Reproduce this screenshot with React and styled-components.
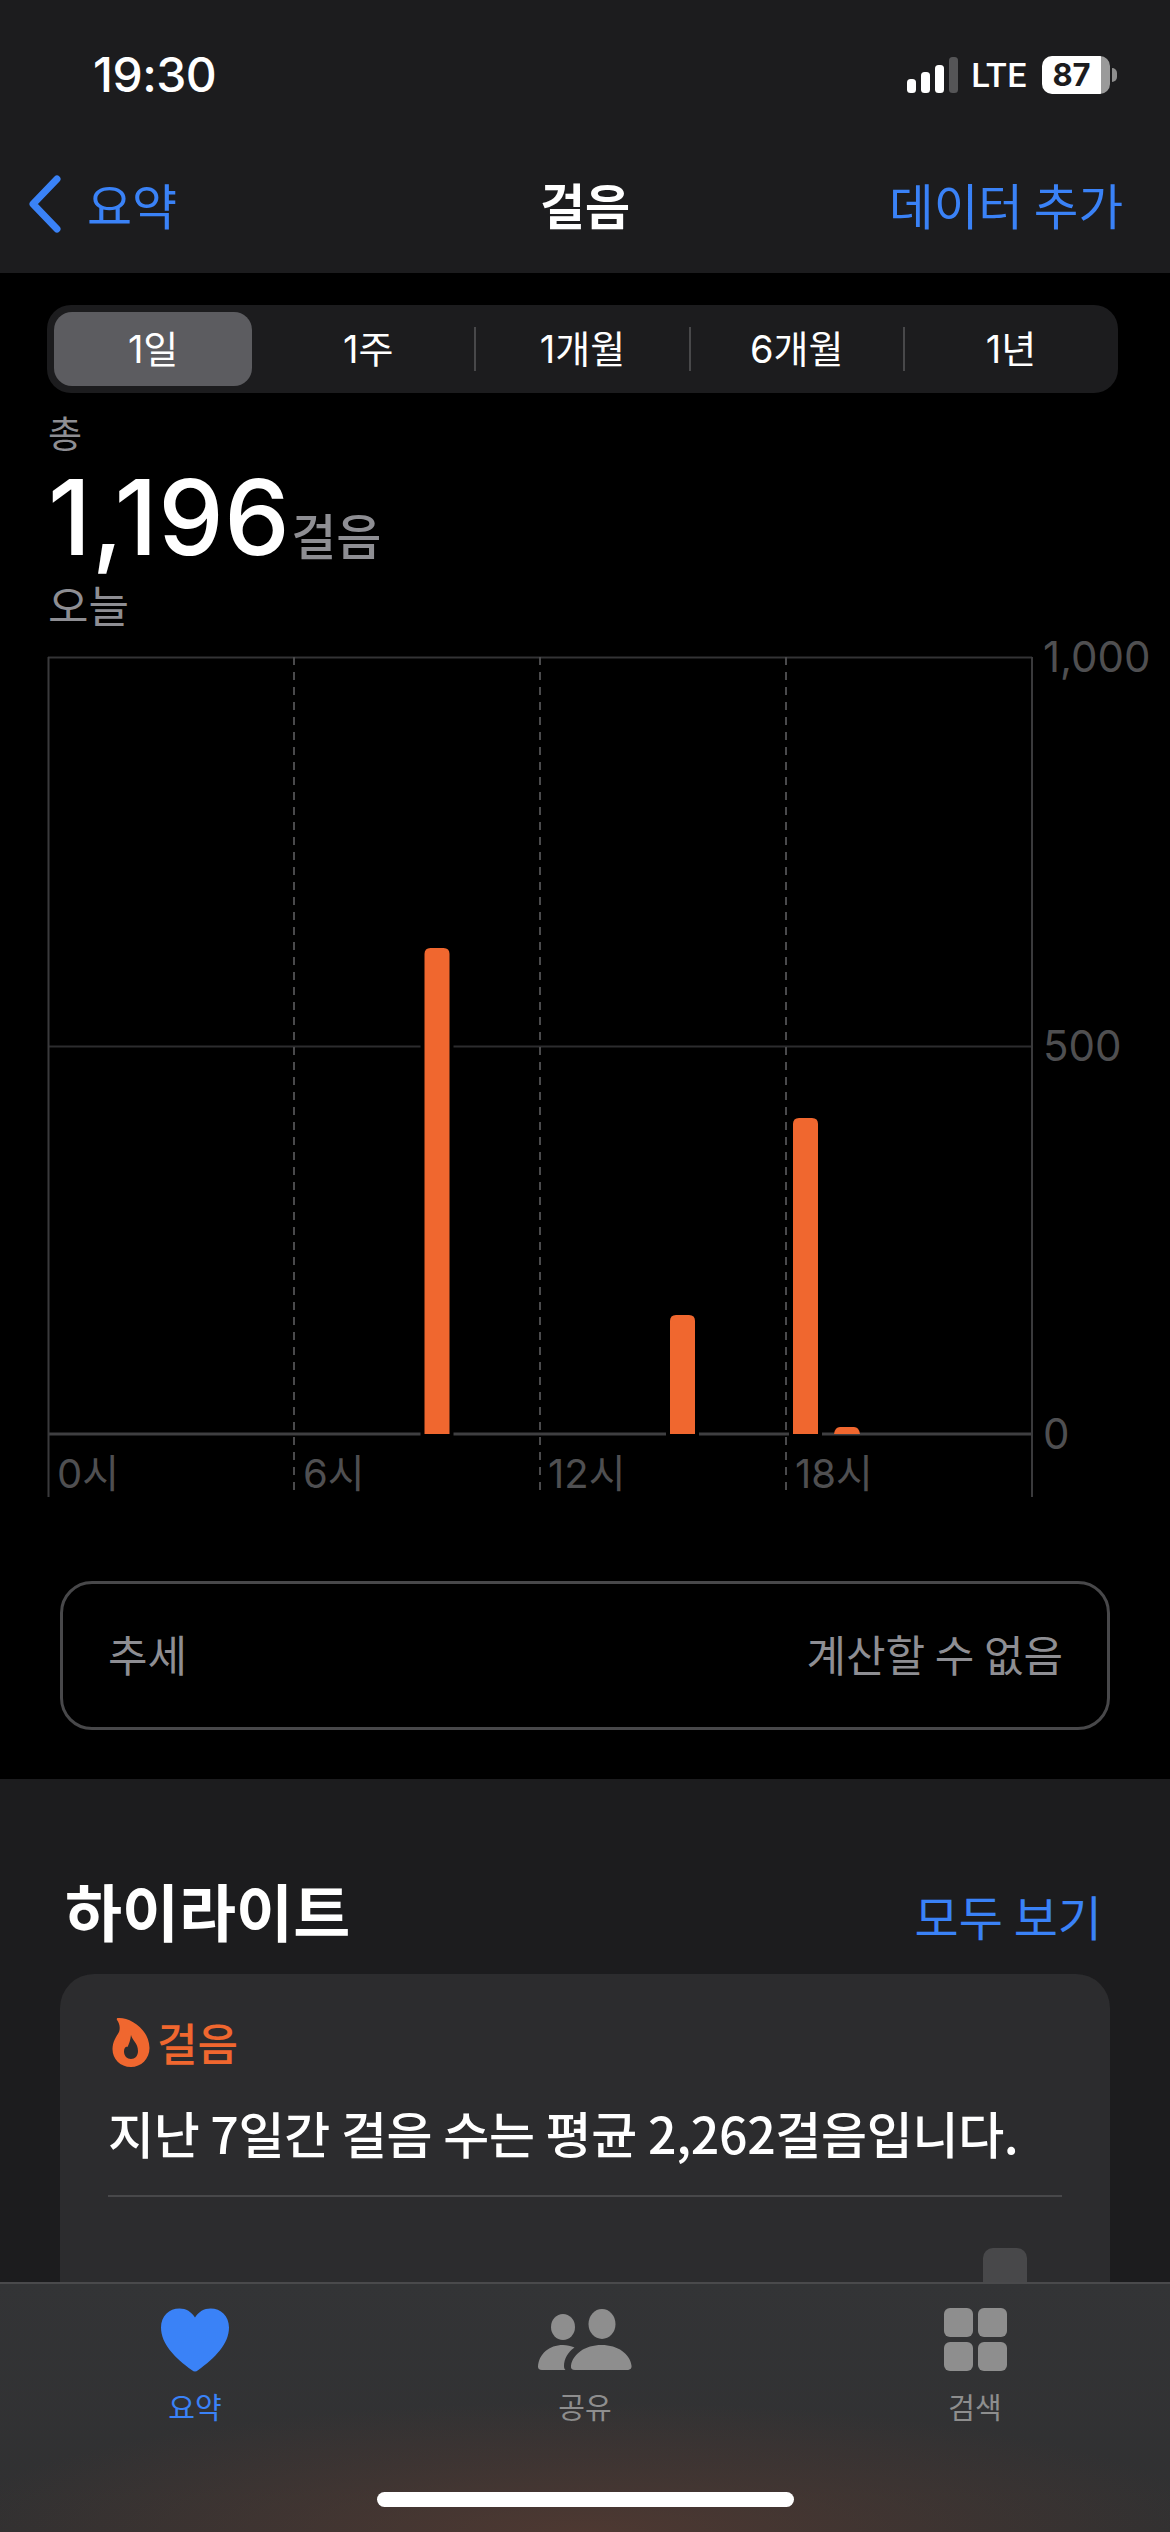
import React from "react";
import styled, { createGlobalStyle } from "styled-components";

const FONT = `"Inter", "Noto Sans CJK KR", sans-serif`;
const KR = `"Noto Sans CJK KR", "Inter", sans-serif`;
const BLUE = "#3a82f7";
const ORANGE = "#f0672f";

const Global = createGlobalStyle`
  html, body { margin: 0; padding: 0; background: #000; }
  * { box-sizing: border-box; }
`;

const Screen = styled.div`
  width: 1170px; height: 2532px; display: flex; flex-direction: column;
  overflow: hidden; background: #000; font-family: ${KR}; color: #fff;
`;
const Header = styled.header`
  height: 273px; flex: none; background: #1c1c1e; display: flex; flex-direction: column;
`;
const StatusBar = styled.div`
  height: 150px; display: flex; align-items: flex-start; justify-content: space-between;
  padding: 47px 53px 0 93px;
`;
const Time = styled.span`
  font: 500 48px/56px ${FONT}; letter-spacing: -0.5px;
`;
const StatusRight = styled.div`
  display: flex; align-items: center; height: 46px; margin-top: 5px;
`;
const Lte = styled.span`
  font: 500 34px/40px "Roboto", sans-serif; margin: 0 15px 0 12px; letter-spacing: 0.5px;
`;
const Battery = styled.div`
  width: 68px; height: 38px; border-radius: 10px; display: flex; align-items: center; justify-content: center;
  padding-right: 9px;
  background: linear-gradient(90deg, #fff 87%, #9a9a9a 87%);
  color: #1c1c1e; font: 700 31px/38px ${FONT};
`;
const BatteryNub = styled.div`
  width: 5px; height: 14px; margin-left: 2px; background: #8e8e8e; border-radius: 0 7px 7px 0;
`;
const NavRow = styled.nav`
  flex: 1; display: grid; grid-template-columns: 1fr auto 1fr; align-items: center;
  padding: 0 28px 16px 28px;
`;
const BackLink = styled.div`
  display: flex; align-items: center; gap: 25px; color: ${BLUE}; font: 400 49px/60px ${KR};
`;
const NavTitle = styled.div`
  font: 700 49px/60px ${KR};
`;
const NavAction = styled.div`
  justify-self: end; color: ${BLUE}; font: 400 48.5px/60px ${KR}; white-space: nowrap; padding-right: 19px;
`;

const Segments = styled.div`
  margin: 32px 52px 0 47px; height: 88px; flex: none; background: #1c1c1e; border-radius: 24px;
  display: grid; grid-template-columns: repeat(5, 1fr);
`;
const Segment = styled.div`
  position: relative; display: flex; align-items: center; justify-content: center;
  font: 400 38px/44px ${FONT};
  &::after {
    content: ""; display: ${(p) => (p.$divider ? "block" : "none")}; position: absolute;
    right: -1px; top: 22px; bottom: 22px; width: 2px; background: #48484a;
  }
`;
const SelectedPill = styled.div`
  flex: 1; align-self: stretch; margin: 7px 9px 7px 7px; border-radius: 18px; background: #5c5c60;
  display: flex; align-items: center; justify-content: center;
`;

const Stats = styled.section`
  height: 247px; flex: none; padding: 16px 0 0 48px; display: flex; flex-direction: column;
`;
const TotalLabel = styled.div`
  font: 400 37px/46px ${KR}; color: #8e8e93;
`;
const BigRow = styled.div`
  display: flex; align-items: baseline; height: 90px; margin-top: 17px;
`;
const BigNumber = styled.span`
  font: 500 104px/90px ${FONT}; letter-spacing: 0.5px;
`;
const BigUnit = styled.span`
  font: 500 49px/60px ${KR}; color: #8e8e93; margin-left: 1px;
`;
const DayLabel = styled.div`
  font: 400 44px/50px ${KR}; color: #8e8e93; margin-top: 17px;
`;

const ChartWrap = styled.div`
  height: 860px; flex: none;
`;
const ChartSvg = styled.svg`
  display: block; width: 1170px; height: 860px; overflow: visible;
`;
const AxisText = styled.text`
  font: 400 ${(p) => p.$size}px ${FONT}; fill: #4f4f51;
`;

const TrendSection = styled.section`
  height: 279px; flex: none; padding: 81px 60px 0;
`;
const TrendBox = styled.div`
  height: 149px; border: 3px solid #48484a; border-radius: 32px; padding: 0 44px 6px 45px;
  display: flex; align-items: center; justify-content: space-between;
  font: 400 43px/56px ${KR}; color: #8e8e93;
`;

const Highlights = styled.section`
  flex: 1; min-height: 0; background: #1c1c1e; overflow: hidden; padding: 0 60px;
  display: flex; flex-direction: column;
`;
const HighlightHead = styled.div`
  height: 195px; flex: none; display: flex; align-items: flex-end; justify-content: space-between;
  padding: 0 8px 22px 5px;
`;
const HighlightTitle = styled.h2`
  margin: 0; font: 700 62px/84px ${KR};
`;
const SeeAll = styled.span`
  color: ${BLUE}; font: 400 48px/64px ${KR}; padding-bottom: 5px;
`;
const Card = styled.article`
  flex: 1; background: #2c2c2e; border-radius: 34px 34px 0 0; padding: 43px 48px 0;
  display: flex; flex-direction: column;
`;
const CardHead = styled.div`
  display: flex; align-items: center; gap: 7px; padding-left: 4px; color: ${ORANGE}; font: 500 44px/50px ${KR};
`;
const CardText = styled.p`
  margin: 30px 0 0; font: 500 50px/70px ${KR}; white-space: nowrap; letter-spacing: -0.3px;
`;
const Rule = styled.div`
  height: 2px; background: #48484a; margin-top: 28px; flex: none;
`;
const MiniBar = styled.div`
  align-self: flex-end; width: 44px; flex: 1; margin: 51px 35px 0 0; background: #48484a;
  border-radius: 10px 10px 0 0;
`;

const TabBar = styled.footer`
  height: 250px; flex: none; border-top: 2px solid #4a4a4c;
  background:
    radial-gradient(ellipse 640px 130px at 50% 100%, rgba(90, 60, 50, 0.7), rgba(90, 60, 50, 0) 100%),
    linear-gradient(180deg, #333436 0%, #303031 100%);
  display: flex; flex-direction: column;
`;
const Tabs = styled.div`
  display: grid; grid-template-columns: 390px 390px 390px; padding-top: 24px;
`;
const Tab = styled.div`
  display: flex; flex-direction: column; align-items: center; gap: 14px;
  color: ${(p) => (p.$active ? BLUE : "#8e8e8e")}; font: 400 29px/40px ${KR};
`;
const IconBox = styled.div`
  height: 64px; display: flex; align-items: center; justify-content: center;
`;
const HomeIndicator = styled.div`
  width: 417px; height: 15px; border-radius: 8px; background: #fff; margin: 66px auto 0; flex: none;
`;

const Back = () => (
  <svg width="34" height="58" viewBox="0 0 34 58">
    <path d="M29 4 L5 29 L29 54" fill="none" stroke={BLUE} strokeWidth="7" strokeLinecap="round" strokeLinejoin="round" />
  </svg>
);
const Signal = () => (
  <svg width="52" height="36" viewBox="0 0 52 36">
    <rect x="0" y="22" width="9" height="14" rx="3.5" fill="#fff" />
    <rect x="14" y="15" width="9" height="21" rx="3.5" fill="#fff" />
    <rect x="28" y="8" width="9" height="28" rx="3.5" fill="#fff" />
    <rect x="42" y="0" width="9" height="36" rx="3.5" fill="#555557" />
  </svg>
);
const Flame = () => (
  <svg width="38" height="50" viewBox="0 0 38 50">
    <path
      fillRule="evenodd"
      fill={ORANGE}
      d="M6 1 C17 0 37 11 37.5 31 C37.5 42 29 50 19 50 C8 50 0.5 42 0.5 32 C0.5 25 4 20 7 15 C8.5 11 7.5 6 5 3 C4.4 2 5 1 6 1 Z
         M19 18 C20 23 26 26 26 34 C26 39 23 42 19 42 C15 42 12 39 12 34.5 C12 31 14 29 15.5 30 C17 27 18.5 23 19 18 Z"
    />
  </svg>
);
const Heart = () => (
  <svg width="68" height="64" viewBox="0 0 68 64">
    <path
      fill={BLUE}
      d="M34 63.5 C33 63.5 32 63 31 62.2 C14 50 0 36 0 19.5 C0 8 8 0.5 18.5 0.5 C25 0.5 30.5 3.8 34 9.5 C37.5 3.8 43 0.5 49.5 0.5 C60 0.5 68 8 68 19.5 C68 36 54 50 37 62.2 C36 63 35 63.5 34 63.5 Z"
    />
  </svg>
);
const People = () => (
  <svg width="94" height="64" viewBox="0 0 94 64">
    <ellipse cx="25" cy="19" rx="12" ry="13" fill="#8e8e8e" />
    <ellipse cx="64" cy="16" rx="13.5" ry="15" fill="#8e8e8e" />
    <path fill="#8e8e8e" d="M4 62 C1 62 0 60.5 0 58.5 C1 46 11 37 25 37 C29 37 33 38 36.5 39.5 C30 44 26 51 26 58 C26 60 26.5 61 27.5 62 Z" />
    <path fill="#8e8e8e" d="M37 62 C34 62 32.5 60.5 33 57.5 C35 46 47 37 63.5 37 C80 37 92 46 93.5 57.5 C94 60.5 92 62 89 62 Z" />
  </svg>
);
const Grid = () => (
  <svg width="64" height="64" viewBox="-1 0 64 64">
    <rect x="0" y="0" width="29" height="29" rx="6" fill="#8e8e8e" />
    <rect x="34" y="0" width="29" height="29" rx="6" fill="#8e8e8e" />
    <rect x="0" y="34" width="29" height="29" rx="6" fill="#8e8e8e" />
    <rect x="34" y="34" width="29" height="29" rx="6" fill="#8e8e8e" />
  </svg>
);

// chart svg origin: page y = 640
const Y0 = 640;
const yy = (y) => y - Y0;
const bars = [
  { x: 424.5, top: 948 },
  { x: 670, top: 1315 },
  { x: 793, top: 1118 },
];
const Chart = () => (
  <ChartSvg viewBox="0 0 1170 860">
    <line x1="48" y1={yy(657.5)} x2="1032" y2={yy(657.5)} stroke="#333335" strokeWidth="2" />
    <line x1="48" y1={yy(1046.5)} x2="1032" y2={yy(1046.5)} stroke="#2c2c2e" strokeWidth="2" />
    <line x1="48" y1={yy(1434)} x2="1032" y2={yy(1434)} stroke="#3f3f41" strokeWidth="3" />
    <line x1="48.5" y1={yy(657)} x2="48.5" y2={yy(1497)} stroke="#3a3a3c" strokeWidth="2" />
    <line x1="1032" y1={yy(657)} x2="1032" y2={yy(1497)} stroke="#3a3a3c" strokeWidth="2" />
    {[294, 540, 786].map((x) => (
      <line key={x} x1={x} y1={yy(657)} x2={x} y2={yy(1497)} stroke="#4a4a4c" strokeWidth="2" strokeDasharray="8 7" />
    ))}
    {bars.map((b) => (
      <g key={b.x}>
        <rect x={b.x - 4} y={yy(b.top) - 3} width="33" height={1434 - b.top + 5} fill="#000" />
        <path
          d={`M${b.x} ${yy(1434)} V${yy(b.top) + 6} q0 -6 6 -6 H${b.x + 19} q6 0 6 6 V${yy(1434)} Z`}
          fill={ORANGE}
        />
      </g>
    ))}
    <path d={`M834 ${yy(1434)} q1 -7 6 -7 H854 q5 0 6 7 Z`} fill={ORANGE} />
    <AxisText $size={42} x="1043" y={yy(672)}>1,000</AxisText>
    <AxisText $size={42} x="1043" y={yy(1061)}>500</AxisText>
    <AxisText $size={42} x="1043" y={yy(1449)}>0</AxisText>
    <AxisText $size={40} x="57" y={yy(1488)}>0시</AxisText>
    <AxisText $size={40} x="303" y={yy(1488)}>6시</AxisText>
    <AxisText $size={40} x="548" y={yy(1488)}>12시</AxisText>
    <AxisText $size={40} x="795" y={yy(1488)}>18시</AxisText>
  </ChartSvg>
);

export default function App() {
  return (
    <Screen>
      <Global />
      <Header>
        <StatusBar>
          <Time>19:30</Time>
          <StatusRight>
            <Signal />
            <Lte>LTE</Lte>
            <Battery>87</Battery>
            <BatteryNub />
          </StatusRight>
        </StatusBar>
        <NavRow>
          <BackLink>
            <Back />
            <span>요약</span>
          </BackLink>
          <NavTitle>걸음</NavTitle>
          <NavAction>데이터 추가</NavAction>
        </NavRow>
      </Header>

      <Segments>
        <Segment><SelectedPill>1일</SelectedPill></Segment>
        <Segment $divider>1주</Segment>
        <Segment $divider>1개월</Segment>
        <Segment $divider>6개월</Segment>
        <Segment>1년</Segment>
      </Segments>

      <Stats>
        <TotalLabel>총</TotalLabel>
        <BigRow>
          <BigNumber>1,196</BigNumber>
          <BigUnit>걸음</BigUnit>
        </BigRow>
        <DayLabel>오늘</DayLabel>
      </Stats>

      <ChartWrap><Chart /></ChartWrap>

      <TrendSection>
        <TrendBox>
          <span>추세</span>
          <span>계산할 수 없음</span>
        </TrendBox>
      </TrendSection>

      <Highlights>
        <HighlightHead>
          <HighlightTitle>하이라이트</HighlightTitle>
          <SeeAll>모두 보기</SeeAll>
        </HighlightHead>
        <Card>
          <CardHead><Flame />걸음</CardHead>
          <CardText>지난 7일간 걸음 수는 평균 2,262걸음입니다.</CardText>
          <Rule />
          <MiniBar />
        </Card>
      </Highlights>

      <TabBar>
        <Tabs>
          <Tab $active><IconBox><Heart /></IconBox>요약</Tab>
          <Tab><IconBox><People /></IconBox>공유</Tab>
          <Tab><IconBox><Grid /></IconBox>검색</Tab>
        </Tabs>
        <HomeIndicator />
      </TabBar>
    </Screen>
  );
}
